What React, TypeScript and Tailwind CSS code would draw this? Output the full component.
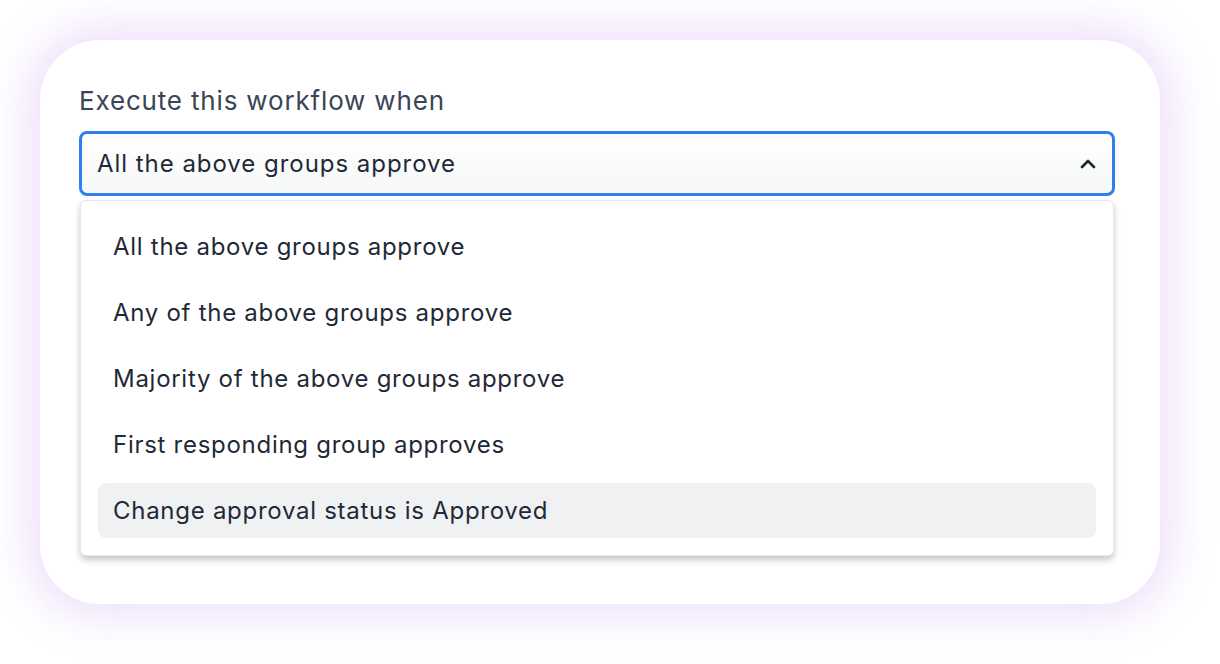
import { ChevronUp } from "lucide-react";

const OPTIONS = [
  "All the above groups approve",
  "Any of the above groups approve",
  "Majority of the above groups approve",
  "First responding group approves",
  "Change approval status is Approved",
];

export default function App() {
  const selected = OPTIONS[0];
  const highlighted = 4;

  return (
    <div className="flex h-[664px] w-[1220px] bg-white p-10 font-['Inter',sans-serif]">
      <div className="flex h-[564px] w-[1120px] flex-col rounded-[60px] bg-white pl-[39px] pr-[45px] pt-[44px] shadow-[0_0_40px_14px_rgba(200,160,245,0.3)]">
        <label className="text-[26px] leading-[34px] tracking-[0.032em] text-[#3a4555]">Execute this workflow when</label>
        <button
          type="button"
          className="mt-[13px] flex h-[65px] w-full items-center justify-between rounded-[8px] border-[3px] border-[#2f80ed] bg-gradient-to-b from-white to-[#f6f7f8] pl-[15px] pr-[12px] text-left"
        >
          <span className="text-[24px] tracking-[0.04em] text-[#1f2937]">{selected}</span>
          <ChevronUp className="h-6 w-6 text-[#1f2937]" strokeWidth={2.75} />
        </button>
        <ul className="mx-px mt-[4px] flex flex-col gap-[11px] rounded-[6px] border border-[#e5e7eb] bg-white px-[17px] pb-[17px] pt-[18px] shadow-[0_4px_6px_rgba(0,0,0,0.22)]">
          {OPTIONS.map((option, index) => (
            <li
              key={option}
              className={
                index === highlighted
                  ? "flex h-[55px] items-center rounded-[8px] bg-[#f0f1f3] px-[15px] text-[24px] tracking-[0.03em] text-[#1f2937]"
                  : "flex h-[55px] items-center rounded-[8px] px-[15px] text-[24px] tracking-[0.03em] text-[#1f2937]"
              }
            >
              {option}
            </li>
          ))}
        </ul>
      </div>
    </div>
  );
}
